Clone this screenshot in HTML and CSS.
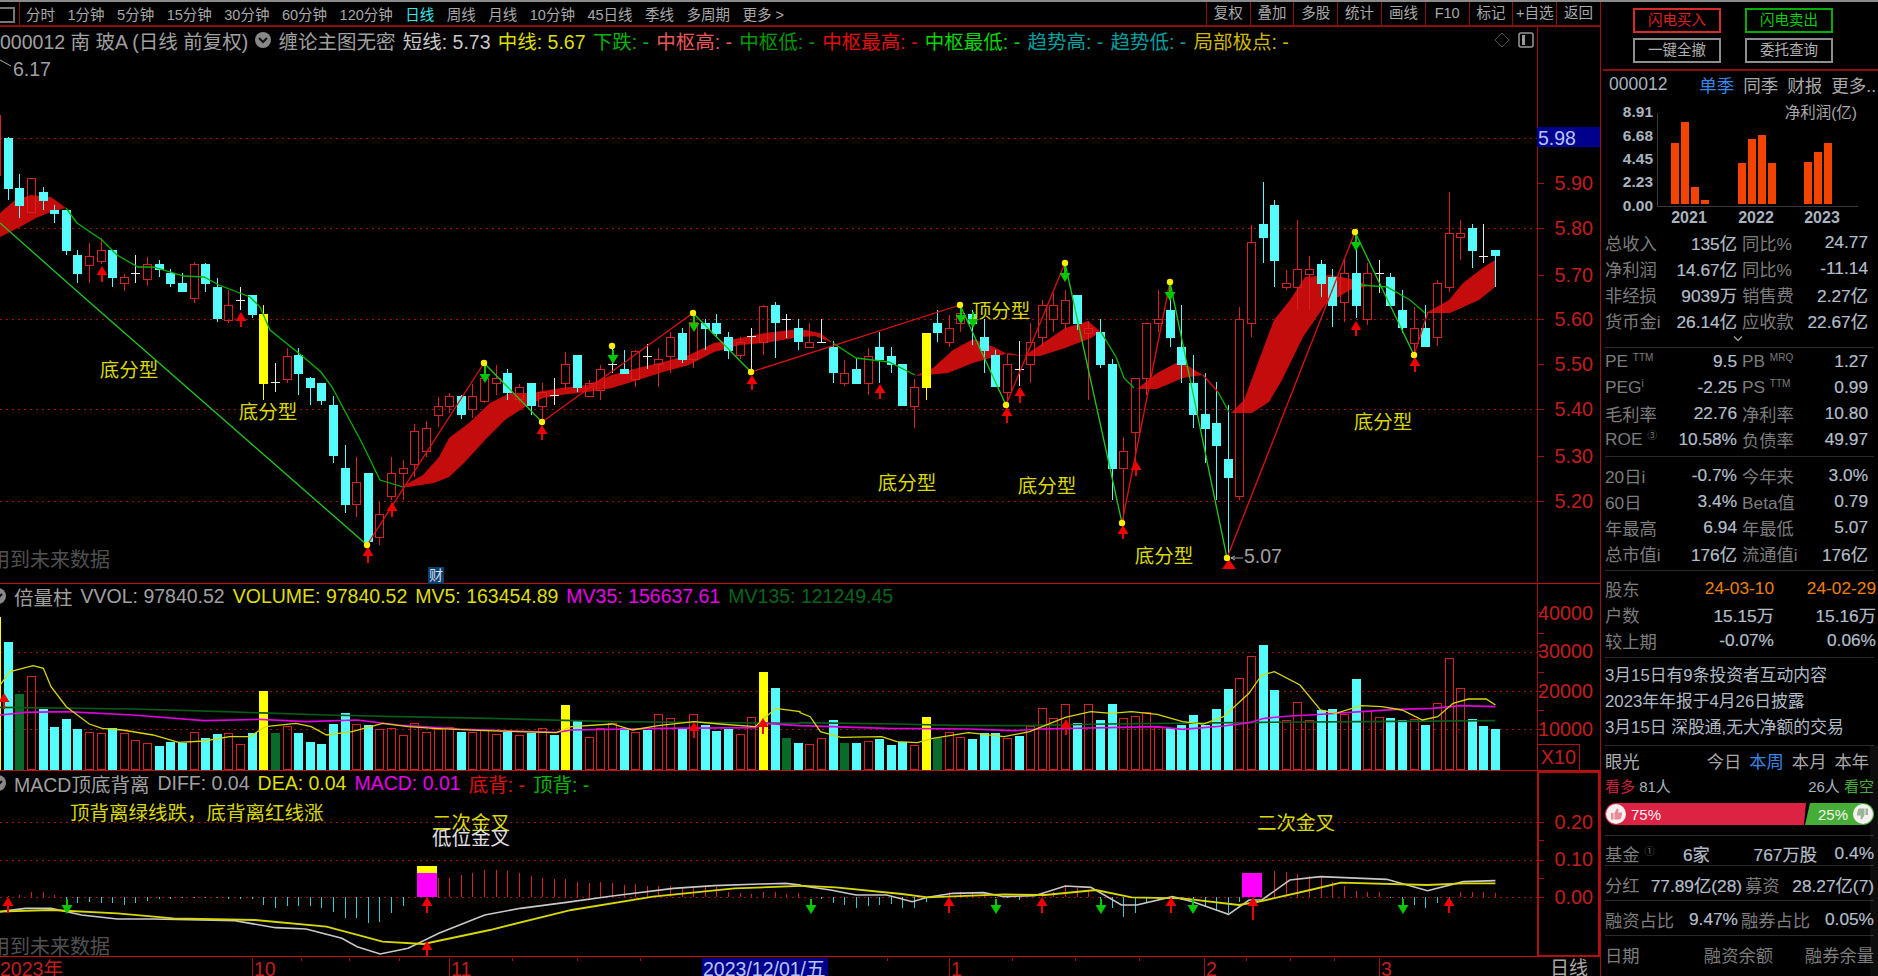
FILE: index.html
```html
<!DOCTYPE html>
<html lang="zh-CN">
<head>
    <meta charset="UTF-8">
    <title>000012 南玻A 日线</title>
    <link rel="stylesheet" href="styles.css">
</head>
<body>
<div class="app">
    <div class="main">
        <div class="toolbar">
            <span class="tb-icon"></span>
            <div class="tb-periods">
                <span>分时</span><span>1分钟</span><span>5分钟</span><span>15分钟</span><span>30分钟</span>
                <span>60分钟</span><span>120分钟</span><span class="is-active">日线</span><span>周线</span><span>月线</span>
                <span>10分钟</span><span>45日线</span><span>季线</span><span>多周期</span><span>更多 &gt;</span>
            </div>
            <div class="tb-tools">
                <span>复权</span><span>叠加</span><span>多股</span><span>统计</span><span>画线</span>
                <span>F10</span><span>标记</span><span>+自选</span><span>返回</span>
            </div>
        </div>

        <div class="pane pane--price">
            <div class="legend">
                <span class="c-grey">000012 南 玻A (日线 前复权)</span>
                <svg class="chevron" viewBox="0 0 16 16"><circle cx="8" cy="8" r="8"/><path d="M4 6l4 4 4-4"/></svg>
                <span class="c-grey">缠论主图无密</span>
                <span class="c-white">短线: 5.73</span>
                <span class="c-yellow">中线: 5.67</span>
                <span class="c-green">下跌: -</span>
                <span class="c-salmon">中枢高: -</span>
                <span class="c-midgreen">中枢低: -</span>
                <span class="c-red">中枢最高: -</span>
                <span class="c-lime">中枢最低: -</span>
                <span class="c-teal">趋势高: -</span>
                <span class="c-teal">趋势低: -</span>
                <span class="c-gold">局部极点: -</span>
            </div>
            <svg class="corner-icons" viewBox="0 0 40 16">
                <path class="ci-line" d="M7 1l7 7-7 7-7-7z"/>
                <rect class="ci-box" x="24" y="1" width="14" height="14" rx="2"/>
                <rect class="ci-fill" x="27" y="3" width="3" height="10"/>
            </svg>
        </div>
        <div class="pane pane--vol">
            <div class="legend legend--sub">
                <svg class="chevron" viewBox="0 0 16 16"><circle cx="8" cy="8" r="8"/><path d="M4 6l4 4 4-4"/></svg>
                <span class="c-grey">倍量柱</span>
                <span class="c-grey">VVOL: 97840.52</span>
                <span class="c-yellow">VOLUME: 97840.52</span>
                <span class="c-yellow">MV5: 163454.89</span>
                <span class="c-magenta">MV35: 156637.61</span>
                <span class="c-darkgreen">MV135: 121249.45</span>
            </div>
        </div>
        <div class="pane pane--macd">
            <div class="legend legend--sub">
                <svg class="chevron" viewBox="0 0 16 16"><circle cx="8" cy="8" r="8"/><path d="M4 6l4 4 4-4"/></svg>
                <span class="c-grey">MACD顶底背离</span>
                <span class="c-grey">DIFF: 0.04</span>
                <span class="c-yellow">DEA: 0.04</span>
                <span class="c-magenta">MACD: 0.01</span>
                <span class="c-red">底背: -</span>
                <span class="c-green">顶背: -</span>
            </div>
        </div>

        <svg class="plot" width="1600" height="976">
            <g id="chart"></g>

            <text class="t-note" x="129" y="370">底分型</text>
            <text class="t-note" x="268" y="412">底分型</text>
            <text class="t-note" x="907" y="483">底分型</text>
            <text class="t-note" x="1047" y="486">底分型</text>
            <text class="t-note" x="1164" y="556">底分型</text>
            <text class="t-note" x="1383" y="422">底分型</text>
            <text class="t-note" x="1001" y="311">顶分型</text>
            <text class="t-note t-long" x="70" y="813">顶背离绿线跌，底背离红线涨</text>
            <text class="t-note" x="471" y="823">二次金叉</text>
            <text class="t-note t-pale" x="471" y="838">低位金叉</text>
            <text class="t-note" x="1296" y="823">二次金叉</text>

            <text class="t-mark" x="13" y="69">6.17</text>
            <text class="t-mark" x="1244" y="556">5.07</text>
            <text class="t-warn" x="-10" y="560">用到未来数据</text>
            <text class="t-warn" x="-10" y="947">用到未来数据</text>

            <rect class="badge" x="428" y="567" width="16" height="17"/>
            <text class="t-badge" x="436" y="575">财</text>

            <rect class="cur-box" x="1537" y="127" width="63" height="20"/>
            <text class="t-cur" x="1538" y="138">5.98</text>
            <text class="t-axis" x="1593" y="183">5.90</text>
            <text class="t-axis" x="1593" y="228">5.80</text>
            <text class="t-axis" x="1593" y="275">5.70</text>
            <text class="t-axis" x="1593" y="319">5.60</text>
            <text class="t-axis" x="1593" y="364">5.50</text>
            <text class="t-axis" x="1593" y="409">5.40</text>
            <text class="t-axis" x="1593" y="456">5.30</text>
            <text class="t-axis" x="1593" y="501">5.20</text>

            <text class="t-axis" x="1593" y="613">40000</text>
            <text class="t-axis" x="1593" y="651">30000</text>
            <text class="t-axis" x="1593" y="691">20000</text>
            <text class="t-axis" x="1593" y="729">10000</text>
            <rect class="x10-box" x="1537.5" y="744.5" width="42" height="26"/>
            <text class="t-axis" x="1576" y="757">X10</text>

            <rect class="macd-box" x="1538" y="772" width="61" height="184"/>
            <text class="t-axis" x="1593" y="822">0.20</text>
            <text class="t-axis" x="1593" y="859">0.10</text>
            <text class="t-axis" x="1593" y="897">0.00</text>

            <text class="t-date" x="0" y="969">2023年</text>
            <text class="t-date" x="254" y="969">10</text>
            <text class="t-date" x="451" y="969">11</text>
            <rect class="cur-box" x="702" y="958" width="126" height="18"/>
            <text class="t-curdate" x="703" y="969">2023/12/01/五</text>
            <text class="t-date" x="951" y="969">1</text>
            <text class="t-date" x="1206" y="969">2</text>
            <text class="t-date" x="1381" y="969">3</text>
            <text class="t-period" x="1569" y="968">日线</text>
        </svg>
    </div>

    <div class="side">
        <div class="trade">
            <span class="trade-btn trade-btn--buy">闪电买入</span>
            <span class="trade-btn trade-btn--sell">闪电卖出</span>
            <span class="trade-btn">一键全撤</span>
            <span class="trade-btn">委托查询</span>
        </div>

        <div class="fin-head">
            <span class="code">000012</span>
            <span class="fin-tabs">
                <span class="is-on">单季</span><span>同季</span><span>财报</span><span>更多..</span>
            </span>
        </div>

        <svg class="fin-chart" width="277" height="131">
            <path class="fin-axis" d="M56.5 14V107.5H257"/>
            <text class="fin-y" x="52" y="12">8.91</text>
            <text class="fin-y" x="52" y="36">6.68</text>
            <text class="fin-y" x="52" y="59">4.45</text>
            <text class="fin-y" x="52" y="82">2.23</text>
            <text class="fin-y" x="52" y="106">0.00</text>
            <text class="fin-title" x="256" y="13">净利润(亿)</text>
            <rect class="fin-bar" x="70" y="44" width="8" height="61"/>
            <rect class="fin-bar" x="80" y="23" width="8" height="82"/>
            <rect class="fin-bar" x="90" y="88" width="8" height="17"/>
            <rect class="fin-bar" x="100" y="101" width="8" height="4"/>
            <rect class="fin-bar" x="137" y="64" width="8" height="41"/>
            <rect class="fin-bar" x="147" y="40" width="8" height="65"/>
            <rect class="fin-bar" x="157" y="36" width="8" height="69"/>
            <rect class="fin-bar" x="167" y="64" width="8" height="41"/>
            <rect class="fin-bar" x="203" y="63" width="8" height="42"/>
            <rect class="fin-bar" x="213" y="53" width="8" height="52"/>
            <rect class="fin-bar" x="223" y="44" width="8" height="61"/>
            <text class="fin-year" x="88" y="118">2021</text>
            <text class="fin-year" x="155" y="118">2022</text>
            <text class="fin-year" x="221" y="118">2023</text>
        </svg>

        <div class="rows">
            <div class="row"><span>总收入</span><b>135亿</b><span>同比%</span><b>24.77</b></div>
            <div class="row"><span>净利润</span><b>14.67亿</b><span>同比%</span><b>-11.14</b></div>
            <div class="row"><span>非经损</span><b>9039万</b><span>销售费</span><b>2.27亿</b></div>
            <div class="row"><span>货币金i</span><b>26.14亿</b><span>应收款</span><b>22.67亿</b></div>
        </div>
        <div class="more-row"><svg viewBox="0 0 10 6"><path d="M1 1l4 4 4-4"/></svg></div>

        <div class="rows rows--top">
            <div class="row"><span>PE <sup>TTM</sup></span><b>9.5</b><span>PB <sup>MRQ</sup></span><b>1.27</b></div>
            <div class="row"><span>PEG<sup>i</sup></span><b>-2.25</b><span>PS <sup>TTM</sup></span><b>0.99</b></div>
            <div class="row"><span>毛利率</span><b>22.76</b><span>净利率</span><b>10.80</b></div>
            <div class="row"><span>ROE <sup>③</sup></span><b>10.58%</b><span>负债率</span><b>49.97</b></div>
        </div>

        <div class="rows rows--ruled">
            <div class="row"><span>20日i</span><b>-0.7%</b><span>今年来</span><b>3.0%</b></div>
            <div class="row"><span>60日</span><b>3.4%</b><span>Beta值</span><b>0.79</b></div>
            <div class="row"><span>年最高</span><b>6.94</b><span>年最低</span><b>5.07</b></div>
            <div class="row"><span>总市值i</span><b>176亿</b><span>流通值i</span><b>176亿</b></div>
        </div>

        <div class="rows rows--ruled rows--holders">
            <div class="hrow"><span>股东</span><b class="c-date">24-03-10</b><b class="c-date">24-02-29</b></div>
            <div class="hrow"><span>户数</span><b>15.15万</b><b>15.16万</b></div>
            <div class="hrow"><span>较上期</span><b>-0.07%</b><b>0.06%</b></div>
        </div>

        <div class="news">
            <div class="news-line c-date">3月15日有9条投资者互动内容</div>
            <div class="news-line">2023年年报于4月26日披露</div>
            <div class="news-line">3月15日 深股通,无大净额的交易</div>
        </div>

        <div class="vision">
            <div class="vision-head">
                <span class="vision-title">眼光</span>
                <span class="vision-tabs"><span>今日</span><span class="is-on">本周</span><span>本月</span><span>本年</span></span>
            </div>
            <div class="vision-count">
                <span><em class="c-bull">看多</em> 81人</span>
                <span>26人 <em class="c-bear">看空</em></span>
            </div>
            <div class="vote">
                <div class="vote-up">
                    <svg class="thumb" viewBox="0 0 20 20">
                        <circle cx="10" cy="10" r="10"/>
                        <path class="thumb-red" d="M5 9h2.5v6.5H5zM8.5 9l2.5-4.5c1.2 0 1.8 1 1.5 2.2L12 8.5h3c.9 0 1.3.7 1.1 1.5l-1.2 4.6c-.2.6-.6.9-1.2.9H8.5z"/>
                    </svg>
                    <span>75%</span>
                </div>
                <div class="vote-down">
                    <span>25%</span>
                    <svg class="thumb" viewBox="0 0 20 20">
                        <circle cx="10" cy="10" r="10"/>
                        <path class="thumb-green" d="M15 11h-2.5V4.5H15zM11.5 11L9 15.5c-1.2 0-1.8-1-1.5-2.2l.5-1.8H5c-.9 0-1.3-.7-1.1-1.5l1.2-4.6c.2-.6.6-.9 1.2-.9h5.2z"/>
                    </svg>
                </div>
            </div>
        </div>

        <div class="line-row line-row--fund"><span>基金 <sup>①</sup></span><b>6家</b><b>767万股</b><b>0.4%</b></div>
        <div class="line-row line-row--split"><span>分红</span><b>77.89亿(28)</b><span>募资</span><b>28.27亿(7)</b></div>
        <div class="line-row line-row--share"><span>融资占比</span><b>9.47%</b><span>融券占比</span><b>0.05%</b></div>
        <div class="line-row line-row--margin"><span>日期</span><span>融资余额</span><span>融券余量</span></div>
        <div class="line-row line-row--margin"><b>03-14</b><b>19.89亿</b><b>133.03万</b></div>
    </div>
</div>
<script src="chart.js"></script>
</body>
</html>
```
FILE: styles.css
```css
* {
    box-sizing: border-box;
}

html, body {
    margin: 0;
    background: #000;
    overflow: hidden;
}

body {
    width: 1878px;
    height: 976px;
    font-family: "Liberation Sans", "Noto Sans CJK SC", sans-serif;
    color: #aaa;
}

.app {
    display: flex;
    height: 976px;
    border-top: 2px solid #8a8a8a;
    overflow: hidden;
}

/* left: chart column */
.main {
    position: relative;
    flex: 0 0 1601px;
    border-right: 1px solid #a01010;
}

.toolbar {
    display: flex;
    align-items: center;
    height: 25px;
    border-bottom: 2px solid #8c0f0f;
    font-size: 14.5px;
    color: #a9a9a9;
    white-space: nowrap;
}

.tb-icon {
    flex: none;
    width: 20px;
    height: 100%;
    border-right: 1px solid #8c0f0f;
    position: relative;
}

.tb-icon::before {
    content: "";
    position: absolute;
    left: -3px;
    top: 5px;
    width: 14px;
    height: 12px;
    border: 2px solid #777;
}

.tb-periods {
    display: flex;
    gap: 12.5px;
    margin-left: 6px;
}

.tb-periods .is-active {
    color: #39e5e5;
}

.tb-tools {
    display: grid;
    grid-template-columns: repeat(9, 43.8px);
    margin-left: auto;
    height: 100%;
}

.tb-tools span {
    border-left: 1px solid #8c0f0f;
    text-align: center;
    line-height: 23px;
}

.pane {
    position: relative;
    border-bottom: 1px solid #c01010;
}

.pane--price {
    height: 557px;
}

.pane--vol {
    height: 187px;
}

.pane--macd {
    height: 186px;
}

.legend {
    display: flex;
    align-items: center;
    gap: 7.2px;
    height: 26px;
    font-size: 19.5px;
    white-space: nowrap;
    overflow: hidden;
}

.legend--sub {
    gap: 8px;
    height: 24px;
    margin-left: -10px;
}

.chevron {
    flex: none;
    width: 16px;
    height: 16px;
}

.chevron circle {
    fill: #888;
}

.chevron path {
    fill: none;
    stroke: #111;
    stroke-width: 2;
}

.corner-icons {
    position: absolute;
    left: 1495px;
    top: 5px;
    width: 40px;
    height: 16px;
}

.ci-line {
    fill: none;
    stroke: #555;
}

.ci-box {
    fill: none;
    stroke: #999;
    stroke-width: 1.5;
}

.ci-fill {
    fill: #999;
}

.c-grey { color: #a0a0a0; }
.c-white { color: #c8c8c8; }
.c-yellow { color: #dede00; }
.c-green { color: #00b800; }
.c-salmon { color: #e85858; }
.c-midgreen { color: #009800; }
.c-red { color: #e00e0e; }
.c-lime { color: #00d800; }
.c-teal { color: #00a0a0; }
.c-gold { color: #d0b800; }
.c-magenta { color: #e800e8; }
.c-darkgreen { color: #0a641a; }

/* the whole chart is one canvas, drawn in page coordinates */
.plot {
    position: absolute;
    left: 0;
    top: -2px;
    pointer-events: none;
}

.plot text {
    dominant-baseline: central;
}

.grid-dot {
    stroke: #a01010;
    stroke-dasharray: 2 4;
    fill: none;
}

.axis-line {
    stroke: #a01010;
    fill: none;
}

.band {
    fill: #c40c0c;
}

.wick-up, .body-up {
    stroke: #d82020;
    fill: none;
}

.wick-dn {
    stroke: #54fcfc;
}

.body-dn {
    fill: #54fcfc;
    stroke: #54fcfc;
}

.wick-doji {
    stroke: #e8e8e8;
    fill: none;
}

.wick-y {
    stroke: #ffff00;
}

.body-y {
    fill: #ffff00;
    stroke: #ffff00;
}

.body-g {
    fill: #0a6a2a;
    stroke: #0a6a2a;
}

.trend {
    stroke: #00b400;
    stroke-width: 1.3;
    fill: none;
}

.zig-up {
    stroke: #e01010;
    stroke-width: 1.3;
    fill: none;
}

.zig-dn {
    stroke: #20c820;
    stroke-width: 1.3;
    fill: none;
}

.arrow-red {
    stroke: #f00000;
    fill: #f00000;
    stroke-width: 2;
}

.arrow-green {
    stroke: #00c800;
    fill: #00c800;
    stroke-width: 2;
}

.arrow-head {
    stroke: none;
}

.dot {
    fill: #ffee00;
}

.ma-yellow, .diff-yellow {
    stroke: #d8d800;
    fill: none;
    stroke-width: 1.3;
}

.diff-yellow {
    stroke-width: 1.8;
}

.ma-magenta {
    stroke: #e000e0;
    fill: none;
    stroke-width: 1.6;
}

.ma-green {
    stroke: #0a5a1a;
    fill: none;
    stroke-width: 1.6;
}

.diff-white {
    stroke: #c8c8c8;
    fill: none;
    stroke-width: 1.6;
}

.hist-up {
    stroke: #d82020;
}

.hist-dn {
    stroke: #37c8d0;
}

.block-pink {
    fill: #ff00ff;
}

.block-yellow {
    fill: #ffff00;
}

.mark-line {
    stroke: #aaa;
    fill: none;
}

.t-note {
    font-size: 19.5px;
    fill: #d8d800;
    text-anchor: middle;
}

.t-long {
    text-anchor: start;
}

.t-pale {
    fill: #e0e0e0;
}

.t-mark {
    font-size: 19.5px;
    fill: #a0a0a0;
}

.t-warn {
    font-size: 20px;
    fill: #505050;
}

.badge {
    fill: #0a3f6f;
}

.t-badge {
    font-size: 14px;
    fill: #dde;
    text-anchor: middle;
}

.cur-box {
    fill: #00008c;
}

.t-cur {
    font-size: 19.5px;
    fill: #b8c4ff;
}

.t-axis {
    font-size: 19.8px;
    fill: #c01e1e;
    text-anchor: end;
}

.x10-box, .macd-box {
    fill: none;
    stroke: #b01010;
}

.macd-box {
    stroke-width: 2;
}

.t-date {
    font-size: 19.5px;
    fill: #c01e1e;
}

.t-curdate {
    font-size: 19.5px;
    fill: #b8c4ff;
}

.t-period {
    font-size: 19px;
    fill: #aaa;
    text-anchor: middle;
}

/* right: quote panel */
.side {
    flex: 1;
    position: relative;
    min-width: 0;
    overflow: hidden;
    font-size: 17.3px;
    white-space: nowrap;
}

.side::after {
    content: "";
    position: absolute;
    right: 0;
    top: 743px;
    bottom: 0;
    width: 8px;
    background: rgba(255, 255, 255, 0.05);
}

.side sup {
    font-size: 10px;
    line-height: 0;
    vertical-align: 6px;
}

.trade {
    display: grid;
    grid-template-columns: 88px 88px;
    grid-auto-rows: 25px;
    gap: 5px 24px;
    justify-content: start;
    height: 69px;
    padding: 6px 0 0 30px;
    border-bottom: 2px solid #8c0f0f;
    margin-left: 2px;
}

.trade-btn {
    border: 2px solid #8f8f8f;
    text-align: center;
    font-size: 14.5px;
    line-height: 21px;
    color: #b0b0b0;
}

.trade-btn--buy {
    border-color: #d82a2a;
    color: #e02020;
}

.trade-btn--sell {
    border-color: #00b000;
    color: #00d000;
}

.fin-head {
    display: flex;
    justify-content: space-between;
    align-items: center;
    height: 28px;
    padding: 0 2px 2px 8px;
    font-size: 17.5px;
}

.code {
    color: #a9b4bf;
}

.fin-tabs {
    display: flex;
    gap: 9px;
}

.is-on {
    color: #3a86e8;
}

.fin-chart {
    display: block;
}

.fin-axis {
    fill: none;
    stroke: #3a3a3a;
}

.fin-y, .fin-year, .fin-title {
    dominant-baseline: central;
    font-size: 15.5px;
    font-weight: bold;
    fill: #a9b4bf;
}

.fin-y {
    text-anchor: end;
}

.fin-year {
    text-anchor: middle;
    font-size: 16px;
}

.fin-title {
    text-anchor: end;
    font-weight: normal;
    fill: #a8a8a8;
}

.fin-bar {
    fill: #f24400;
}

.rows {
    padding: 0 4px;
}

.rows--top {
    margin-top: 1px;
    padding-bottom: 3px;
}

.rows--ruled {
    margin: 0 4px;
    padding: 6px 0 3px;
    border-top: 1px solid #2a2a2a;
}

.rows--holders {
    padding-top: 5px;
}

.row {
    display: grid;
    grid-template-columns: 55px 77px 68px 63px;
    column-gap: 0;
    align-items: center;
    height: 26px;
    padding-bottom: 2px;
}

.row span {
    color: #7c7c7c;
}

.row span:nth-child(3) {
    margin-left: 5px;
}

.row b, .hrow b, .line-row b {
    font-weight: normal;
    color: #b4bec8;
    -webkit-text-stroke: 0.2px #b4bec8;
}

.row b {
    text-align: right;
}

.more-row {
    height: 14px;
    margin: 0 4px;
    border-bottom: 1px solid #2a2a2a;
    text-align: center;
    line-height: 0;
}

.more-row svg {
    width: 10px;
    height: 7px;
    margin: 1px 0 0 -3px;
}

.more-row path {
    fill: none;
    stroke: #999;
    stroke-width: 1.5;
}

.hrow {
    display: grid;
    grid-template-columns: 60px 109px 102px;
    align-items: center;
    height: 26px;
    padding-bottom: 2px;
}

.hrow span {
    color: #7c7c7c;
}

.hrow b {
    text-align: right;
}

.hrow .c-date, .c-date {
    color: #f08000;
    -webkit-text-stroke: 0;
}

.news {
    margin: 0 4px;
    padding: 6px 0 3px;
    border-top: 1px solid #2a2a2a;
    border-bottom: 1px solid #2a2a2a;
}

.news-line {
    height: 26px;
    line-height: 24px;
    color: #b0bac4;
    font-size: 16.8px;
}

.vision {
    margin: 0 4px;
    height: 90px;
    border-bottom: 1px solid #2a2a2a;
}

.vision-head {
    display: flex;
    justify-content: space-between;
    align-items: center;
    height: 30px;
    padding-top: 1px;
    padding-bottom: 2px;
}

.vision-title {
    color: #b0b0b0;
}

.vision-tabs {
    display: flex;
    gap: 8px;
    color: #a8a8a8;
    margin-right: 5px;
}

.vision-count {
    display: flex;
    justify-content: space-between;
    align-items: center;
    height: 20px;
    padding-bottom: 2px;
    font-size: 15px;
    color: #a9b4bf;
}

.vision-count em {
    font-style: normal;
}

.c-bull { color: #c8203c; }
.c-bear { color: #46ad37; }

.vote {
    display: flex;
    height: 22px;
    margin-top: 7px;
    border-radius: 11px;
    overflow: hidden;
    font-size: 15px;
    color: #f4f4f4;
}

.vote-up, .vote-down {
    display: flex;
    align-items: center;
    gap: 5px;
}

.vote-up {
    flex: 0 0 201px;
    background: #dc2344;
    padding-left: 1px;
    clip-path: polygon(0 0, 100% 0, 99% 100%, 0 100%);
}

.vote-down {
    flex: 1;
    justify-content: flex-end;
    background: #46ad37;
    padding-right: 1px;
    margin-left: -1px;
    clip-path: polygon(5px 0, 100% 0, 100% 100%, 0 100%);
}

.thumb {
    flex: none;
    width: 20px;
    height: 20px;
}

.thumb circle {
    fill: #f6f0f0;
}

.thumb-red {
    fill: #e88a98;
}

.thumb-green {
    fill: #9ab59a;
}

.line-row {
    display: grid;
    align-items: center;
    height: 35px;
    padding-top: 2px;
    margin: 0 4px;
    border-bottom: 1px solid #2a2a2a;
    color: #7c7c7c;
}

.line-row b {
    text-align: right;
}

.line-row--fund {
    grid-template-columns: 78px 25px 109px 1fr;
    height: 30px;
    padding-top: 5px;
}

.line-row--split {
    grid-template-columns: 40px 97px 44px 1fr;
}

.line-row--split span:nth-of-type(2),
.line-row--share span:nth-of-type(2) {
    margin-left: 3px;
}

.line-row--share {
    grid-template-columns: 68px 65px 68px 1fr;
}

.line-row--margin {
    grid-template-columns: 40px 128px 1fr;
    height: 30px;
    padding-top: 6px;
    border-bottom: 0;
    text-align: right;
}

.line-row--margin > :first-child {
    text-align: left;
}
```
FILE: chart.js
```js
// candle pitch on screen
var SVG = '';

function X(i) {
    return Math.round(7.65 + (i - 1) * 11.62);
}

function add(tag, cls, attrs) {
    SVG += '<' + tag + ' class="' + cls + '" ' + attrs + '/>';
}

function line(cls, x1, y1, x2, y2) {
    add('line', cls, 'x1="' + x1 + '" y1="' + y1 + '" x2="' + x2 + '" y2="' + y2 + '"');
}

function poly(tag, cls, pts) {
    add(tag, cls, 'points="' + pts.map(function (p) { return p[0] + ',' + p[1]; }).join(' ') + '"');
}

// crop readings: x at 1.96 per pixel, y at 3 per pixel
function traced(pts, x0, y0) {
    return pts.map(function (p) { return [x0 + p[0] / 1.96, y0 + p[1] / 3]; });
}

function arrow(cls, x, y1, y2, down) {
    // y1 is the head end
    var dir = down ? -1 : 1;
    line(cls, x, y1 + dir * 6, x, y2);
    poly('polygon', cls + ' arrow-head', [[x, y1 - dir], [x - 5.5, y1 + dir * 8], [x + 5.5, y1 + dir * 8]]);
}

function dot(x, y) {
    add('circle', 'dot', 'cx="' + x + '" cy="' + y + '" r="3.2"');
}

/* --- grid and axes --- */
[138, 228, 319, 409, 501, 652, 691, 729, 822, 860, 897].forEach(function (y) {
    line('grid-dot', 0, y + 0.5, 1537, y + 0.5);
});
line('axis-line', 1537.5, 27, 1537.5, 771);
[183, 228, 275, 319, 364, 409, 456, 501, 612, 633, 651, 672, 691, 710, 729, 822, 840, 860, 878, 897].forEach(function (y) {
    line('axis-line', 1537, y + 0.5, 1544, y + 0.5);
});
[252, 449, 949, 1204, 1379].forEach(function (x) {
    line('axis-line', x + 0.5, 958, x + 0.5, 976);
});
[301, 349, 399, 512, 577, 640, 887, 1012, 1075, 1139, 1246, 1290, 1334].forEach(function (x) {
    line('axis-line', x + 0.5, 958, x + 0.5, 961);
});

/* --- price pane ribbon --- */
var bands = [
    [[0, 213], [15, 200], [31, 195], [51, 197], [66, 208], [51, 212], [36, 218], [20, 227], [0, 237]],
    [[403, 486], [423, 475], [439, 457], [449, 438], [469, 423], [490, 403], [510, 393], [531, 393], [561, 388],
        [587, 385], [612, 375], [638, 368], [663, 362], [689, 355], [714, 343], [740, 338], [765, 333], [800, 329],
        [820, 333], [833, 343], [815, 336], [800, 337], [765, 343], [740, 345], [714, 352], [689, 365], [663, 372],
        [638, 380], [612, 388], [587, 392], [561, 395], [543, 398], [525, 407], [505, 420], [485, 440], [464, 463],
        [449, 477], [434, 483], [408, 487]],
    [[915, 376], [933, 368], [953, 350], [973, 339], [994, 347], [1009, 355], [1024, 356], [1009, 353], [973, 363], [948, 373]],
    [[1024, 356], [1065, 328], [1088, 321], [1101, 332], [1091, 338], [1065, 348], [1040, 356]],
    [[1137, 389], [1157, 373], [1180, 361], [1203, 375], [1183, 378], [1157, 389]],
    [[1231, 413], [1244, 400], [1259, 360], [1274, 320], [1290, 300], [1305, 277], [1331, 275], [1356, 280], [1369, 286],
        [1350, 290], [1325, 305], [1303, 337], [1282, 380], [1269, 402], [1252, 413]],
    [[1426, 313], [1449, 300], [1463, 283], [1484, 267], [1495, 260], [1495, 287], [1479, 300], [1450, 313]]
];
bands.forEach(function (b) {
    poly('polygon', 'band', b);
});

/* --- candles: type, high, open/top, close/bottom, low --- */
var candles = [
    ['u', 115, 115, 175, 180], ['d', 137, 138, 188, 200], ['d', 174, 188, 205, 218], ['u', 178, 178, 212, 213],
    ['d', 187, 192, 200, 210], ['d', 205, 210, 213, 223], ['d', 210, 210, 250, 255], ['d', 250, 255, 273, 283],
    ['u', 243, 256, 265, 283], ['u', 238, 250, 261, 264], ['d', 250, 250, 277, 287], ['u', 274, 277, 283, 291],
    ['w', 255, 273, 273, 283], ['u', 257, 264, 279, 286], ['d', 260, 264, 269, 277], ['d', 269, 273, 283, 287],
    ['d', 273, 283, 291, 291], ['u', 262, 264, 298, 303], ['d', 263, 264, 283, 292], ['d', 278, 287, 318, 322],
    ['u', 290, 305, 320, 323], ['w', 287, 300, 300, 310], ['d', 295, 295, 314, 318], ['y', 305, 314, 383, 400],
    ['w', 363, 382, 382, 392], ['u', 348, 356, 379, 383], ['d', 348, 355, 373, 395], ['d', 377, 378, 387, 405],
    ['d', 383, 383, 400, 405], ['d', 396, 405, 455, 463], ['d', 445, 468, 504, 513], ['u', 457, 482, 504, 517],
    ['d', 473, 473, 541, 545], ['u', 502, 514, 537, 545], ['u', 457, 473, 496, 500], ['u', 460, 468, 473, 500],
    ['u', 424, 431, 464, 477], ['u', 421, 428, 451, 457], ['u', 397, 406, 415, 427], ['u', 393, 396, 406, 413],
    ['d', 395, 396, 414, 419], ['u', 384, 396, 409, 418], ['u', 366, 378, 401, 403], ['u', 365, 378, 383, 395],
    ['d', 369, 373, 392, 400], ['u', 384, 387, 399, 403], ['d', 383, 383, 405, 415], ['u', 383, 392, 406, 422],
    ['w', 378, 395, 395, 405], ['u', 352, 364, 383, 390], ['d', 355, 355, 387, 392], ['u', 380, 383, 396, 396],
    ['u', 365, 369, 390, 400], ['w', 347, 364, 364, 373], ['d', 350, 369, 373, 373], ['u', 350, 351, 379, 387],
    ['w', 344, 356, 356, 369], ['u', 348, 359, 364, 387], ['u', 332, 337, 356, 373], ['d', 328, 333, 359, 363],
    ['u', 313, 322, 359, 368], ['d', 319, 323, 328, 350], ['d', 314, 323, 333, 337], ['d', 332, 337, 350, 359],
    ['u', 337, 342, 355, 359], ['w', 328, 336, 336, 372], ['u', 305, 306, 342, 355], ['d', 302, 305, 322, 358],
    ['w', 314, 319, 319, 338], ['d', 319, 328, 341, 350], ['u', 323, 342, 347, 347], ['w', 319, 342, 342, 343],
    ['d', 341, 347, 372, 383], ['u', 360, 373, 383, 386], ['d', 359, 369, 383, 383], ['u', 348, 356, 383, 395],
    ['d', 332, 347, 359, 383], ['d', 347, 356, 364, 373], ['d', 364, 364, 405, 405], ['u', 379, 387, 406, 428],
    ['y', 333, 333, 387, 400], ['d', 310, 323, 332, 342], ['u', 315, 328, 342, 347], ['u', 304, 313, 323, 332],
    ['d', 310, 314, 323, 345], ['d', 319, 337, 350, 373], ['d', 350, 355, 386, 387], ['u', 354, 364, 392, 406],
    ['w', 341, 369, 369, 386], ['u', 323, 342, 364, 383], ['u', 300, 305, 337, 347], ['u', 293, 305, 319, 332],
    ['u', 290, 300, 323, 330], ['d', 295, 295, 323, 330], ['u', 321, 328, 333, 400], ['d', 319, 332, 364, 368],
    ['d', 359, 364, 468, 500], ['u', 437, 451, 468, 520], ['u', 378, 378, 432, 463], ['u', 323, 323, 378, 395],
    ['u', 290, 319, 323, 332], ['d', 297, 310, 337, 347], ['d', 305, 347, 364, 383], ['d', 355, 383, 414, 428],
    ['d', 373, 414, 428, 463], ['d', 382, 423, 445, 500], ['d', 405, 459, 477, 557], ['u', 307, 319, 496, 500],
    ['u', 225, 242, 323, 337], ['d', 182, 224, 237, 263], ['d', 200, 205, 260, 287], ['u', 270, 283, 287, 290],
    ['u', 220, 269, 287, 310], ['u', 256, 269, 274, 310], ['d', 260, 264, 283, 297], ['d', 269, 277, 305, 327],
    ['u', 260, 273, 302, 322], ['d', 233, 273, 305, 318], ['u', 263, 273, 319, 325], ['w', 260, 273, 273, 293],
    ['d', 273, 277, 305, 307], ['d', 290, 310, 327, 333], ['u', 307, 328, 343, 353], ['d', 305, 328, 346, 346],
    ['u', 280, 283, 337, 346], ['u', 192, 233, 287, 292], ['u', 220, 233, 237, 260], ['d', 224, 228, 250, 268],
    ['w', 224, 256, 256, 263], ['d', 250, 250, 255, 287]
];

function bar(kind, x, top, bottom) {
    var cls = { u: 'body-up', d: 'body-dn', y: 'body-y', g: 'body-g' }[kind];
    add('rect', cls, 'x="' + (x - 3.5) + '" y="' + (top + 0.5) + '" width="8" height="' + (bottom - top) + '"');
}

candles.forEach(function (c, i) {
    var x = X(i), mid = x + 0.5;
    if (c[0] === 'w') {
        line('wick-doji', mid, c[1], mid, c[4]);
        line('wick-doji', x - 4, c[2] + 0.5, x + 5, c[2] + 0.5);
        return;
    }
    var wick = { u: 'wick-up', d: 'wick-dn', y: 'wick-y' }[c[0]];
    line(wick, mid, c[1], mid, c[2]);
    line(wick, mid, c[3], mid, c[4]);
    bar(c[0], x, c[2], c[3]);
});

/* --- trend lines on the price pane --- */
poly('polyline', 'trend', [[66, 208], [77, 223], [102, 240], [117, 255], [138, 267], [153, 267], [184, 276], [204, 277],
    [219, 285], [250, 297], [260, 307], [270, 330], [301, 355], [321, 372], [332, 387], [347, 415], [362, 443], [380, 480], [403, 487]]);
poly('polyline', 'trend', [[833, 343], [856, 358], [889, 362], [915, 375]]);
poly('polyline', 'trend', [[1101, 332], [1116, 357], [1124, 378], [1134, 388]]);
poly('polyline', 'trend', [[1218, 392], [1229, 412]]);
poly('polyline', 'trend', [[1361, 285], [1387, 287], [1410, 300], [1425, 313]]);
line('zig-up', 1203, 375, 1218, 392);

var zigzag = [[0, 223], [87, 300], [367, 545], [484, 363], [542, 422], [693, 313], [751, 372], [960, 305], [1006, 405],
    [1065, 263], [1122, 523], [1170, 282], [1227, 558], [1355, 232], [1414, 355], [1428, 312]];
for (var z = 0; z < zigzag.length - 1; z++) {
    var goingUp = zigzag[z + 1][1] < zigzag[z][1];
    line(goingUp ? 'zig-up' : 'zig-dn', zigzag[z][0], zigzag[z][1], zigzag[z + 1][0], zigzag[z + 1][1]);
}

[[241, 313, 327], [368, 548, 563], [392, 503, 517], [542, 426, 440], [752, 376, 390], [880, 385, 399], [1007, 408, 423],
    [1020, 388, 403], [1123, 526, 539], [1136, 462, 476], [1356, 322, 336], [1415, 358, 372], [102, 267, 282]].forEach(function (a) {
    arrow('arrow-red', a[0], a[1], a[2], false);
});
poly('polygon', 'arrow-red', [[1229, 561], [1224, 568], [1234, 568]]);

[[485, 382, 365], [613, 363, 350], [694, 331, 315], [961, 323, 307], [973, 327, 312], [1065, 281, 265], [1170, 300, 283],
    [1356, 250, 233]].forEach(function (a) {
    arrow('arrow-green', a[0], a[1], a[2], true);
});

[[367, 545], [484, 363], [542, 422], [612, 346], [693, 313], [751, 372], [960, 305], [1006, 405], [1065, 263], [1122, 523],
    [1170, 282], [1227, 558], [1355, 232], [1414, 355]].forEach(function (d) {
    dot(d[0], d[1]);
});

// small pointers to the high and low
SVG += '<path class="mark-line" d="M1231 558H1243M1231 558l4-2M1231 558l4 2M0 60L11 66"/>';

/* --- volume pane --- */
var vol = ('y110 c185 g342 r287 c387 c440 c417 c447 r455 r458 c445 r458 r481 r488 c498 c487 c490 r455 c475 c461 r458 r492 ' +
    'c458 y334 g458 r437 c458 c485 c491 c431 c398 r432 c435 r447 r443 r466 r428 r455 r447 r440 c456 r455 r447 r462 c456 r466 ' +
    'c458 r443 c466 y376 c424 r470 r445 r430 c445 r455 c450 r403 r413 c447 r403 c435 c454 c447 r462 r410 y275 c323 g473 c488 ' +
    'r493 r474 c421 g488 c488 r482 c476 c495 c486 r496 y410 g475 r456 r470 c476 c458 c458 r474 c467 r437 r384 r413 r373 c428 ' +
    'r373 c421 c372 r413 r409 r395 r440 c445 c436 c406 c436 c387 c327 r294 r227 c196 c331 r421 r365 r421 c391 c387 r403 c297 ' +
    'r394 r410 c413 c421 r417 c436 r369 r234 r324 c417 c439 c447').split(' ');

vol.forEach(function (v, i) {
    var kind = { y: 'y', c: 'd', g: 'g', r: 'u' }[v[0]];
    bar(kind, X(i), Math.round(580 + parseInt(v.slice(1), 10) / 3), 769);
});

poly('polyline', 'ma-green', traced([[0, 382], [260, 387], [440, 395], [640, 405], [780, 410], [960, 415], [1200, 425], [1568, 430]], 0, 580)
    .concat(traced([[0, 428], [190, 432], [300, 436], [440, 437], [600, 432], [900, 427], [1100, 425], [1363, 422]], 800, 580)));
poly('polyline', 'ma-magenta', traced([[0, 405], [50, 397], [130, 395], [260, 405], [400, 422], [510, 418], [600, 425], [700, 420], [780, 435],
    [900, 447], [1090, 457], [1120, 450], [1300, 445], [1480, 443], [1500, 430], [1568, 437]], 0, 580)
    .concat(traced([[0, 437], [170, 445], [330, 447], [420, 452], [470, 447], [700, 440], [750, 448], [830, 438], [880, 428], [910, 415], [960, 408],
        [1000, 405], [1100, 395], [1170, 388], [1240, 385], [1295, 377], [1363, 380]], 800, 580)));
poly('polyline', 'ma-yellow', traced([[0, 315], [20, 275], [65, 257], [85, 265], [100, 320], [130, 380], [175, 432], [200, 445], [240, 450],
    [300, 465], [350, 487], [400, 483], [450, 470], [490, 470], [520, 440], [580, 430], [610, 440], [640, 465], [690, 455], [750, 430], [800, 440],
    [850, 445], [950, 452], [1090, 458], [1120, 440], [1200, 432], [1240, 450], [1290, 437], [1360, 425], [1410, 432], [1480, 440], [1520, 385], [1568, 395]], 0, 580)
    .concat(traced([[0, 398], [20, 410], [40, 455], [80, 472], [160, 470], [190, 485], [230, 488], [260, 475], [330, 458], [400, 470], [450, 455],
        [520, 412], [570, 395], [610, 400], [650, 395], [700, 403], [750, 425], [790, 432], [830, 410], [880, 340], [905, 285], [930, 275], [980, 315],
        [1020, 390], [1050, 400], [1100, 377], [1140, 380], [1180, 390], [1220, 420], [1250, 410], [1280, 370], [1310, 357], [1345, 357], [1363, 375]], 800, 580)));

[[4, 694, 709], [694, 723, 738], [763, 719, 734], [1066, 720, 735]].forEach(function (a) {
    arrow('arrow-red', a[0], a[1], a[2], false);
});

/* --- macd pane: stick ends, as read from the crops --- */
var macd = [952, 947, 945, 935, 935, 945, 960, 968, 965, 968, 970, 975, 970, 963, 958, 958, 953, 953, 953, 955, 957, 957, 957, 975, 985,
    978, 978, 978, 985, 997, 1015, 1015, 1030, 1025, 1000, 978, 952, 952, 895, 893, 885, 880, 870, 870, 872, 878, 888, 893, 897, 897, 905,
    910, 907, 908, 915, 912, 918, 918, 918, 920, 920, 917, 922, 935, 940, 942, 935, 935, 942, 940, 952, 958, 970, 975, 983, 978, 975, 972,
    983, 983, 965, 950, 935, 935, 935, 935, 955, 955, 960, 950, 940, 935, 918, 925, 930, 960, 985, 1012, 1000, 970, 958, 955, 960, 965, 982,
    990, 1000, 965, 952, 952, 873, 877, 883, 887, 895, 905, 918, 932, 935, 937, 953, 965, 975, 985, 970, 953, 935, 935, 935, 940];

macd.forEach(function (v, i) {
    var y = 580 + v / 3, x = X(i) + 0.5;
    if (v === 952) return;
    line(v < 952 ? 'hist-up' : 'hist-dn', x, 897, x, Math.round(y));
});

add('rect', 'block-yellow', 'x="417" y="866" width="20" height="8"');
add('rect', 'block-pink', 'x="417" y="873" width="20" height="24"');
add('rect', 'block-pink', 'x="1242" y="873" width="20" height="24"');

poly('polyline', 'diff-white', traced([[0, 995], [50, 985], [100, 985], [160, 1005], [230, 1017], [300, 1017], [460, 1022], [540, 1043], [600, 1047],
    [670, 1075], [700, 1100], [745, 1122], [800, 1105], [860, 1060], [950, 1005], [1020, 985], [1110, 967], [1200, 948], [1320, 925], [1400, 917],
    [1490, 912], [1540, 910], [1568, 915]], 0, 580)
    .concat(traced([[0, 917], [60, 930], [110, 945], [170, 945], [220, 965], [250, 952], [300, 940], [360, 938], [400, 950], [460, 947], [520, 918],
        [570, 922], [630, 975], [660, 975], [730, 950], [770, 965], [840, 1003], [880, 960], [905, 960], [960, 900], [1020, 890], [1150, 898], [1230, 932],
        [1300, 905], [1363, 902]], 800, 580)));
poly('polyline', 'diff-yellow', traced([[0, 995], [100, 990], [230, 1000], [340, 1015], [500, 1020], [640, 1040], [750, 1085], [830, 1092], [960, 1050],
    [1120, 990], [1280, 950], [1440, 925], [1568, 918]], 0, 580)
    .concat(traced([[0, 917], [70, 922], [200, 942], [250, 952], [400, 943], [480, 945], [580, 930], [650, 952], [750, 955], [860, 975], [900, 965], [1000, 930],
        [1060, 908], [1230, 915], [1300, 910], [1363, 910]], 800, 580)));

[[8, 898, 913], [427, 898, 913], [427, 942, 957], [949, 898, 913], [1042, 898, 913], [1171, 898, 913], [1253, 898, 920], [1449, 898, 913]].forEach(function (a) {
    arrow('arrow-red', a[0], a[1], a[2], false);
});
[[67, 913, 899], [811, 913, 899], [996, 913, 899], [1101, 913, 899], [1193, 913, 899], [1403, 913, 899]].forEach(function (a) {
    arrow('arrow-green', a[0], a[1], a[2], true);
});

document.getElementById('chart').innerHTML = SVG;
```
